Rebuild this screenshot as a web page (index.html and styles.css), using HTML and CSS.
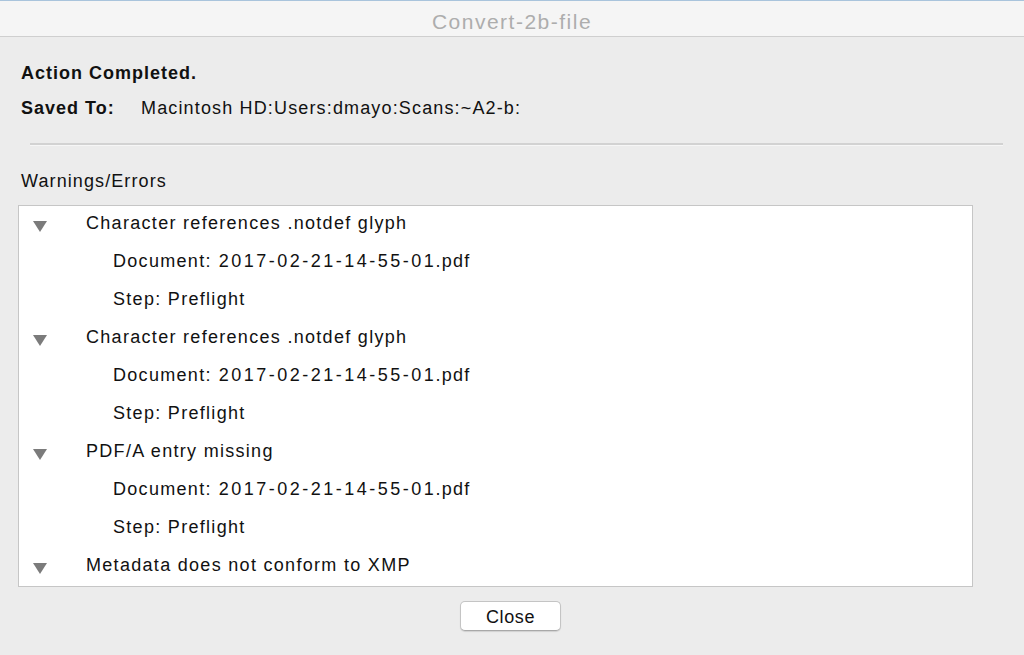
FILE: index.html
```html
<!DOCTYPE html>
<html>
<head>
<meta charset="utf-8">
<link rel="stylesheet" href="styles.css">
</head>
<body>
<div class="window">
  <div class="titlebar">Convert-2b-file</div>
  <div class="content">
    <div class="status">Action Completed.</div>
    <div class="saved"><span class="label">Saved To:</span><span class="path">Macintosh HD:Users:dmayo:Scans:~A2-b:</span></div>
    <div class="sep"></div>
    <div class="section">Warnings/Errors</div>
    <div class="list">
      <div class="row top"><span class="tri"></span><span>Character references .notdef glyph</span></div>
      <div class="row sub">Document:<span class="num">2017-02-21-14-55-01</span>.pdf</div>
      <div class="row sub">Step: Preflight</div>
      <div class="row top"><span class="tri"></span><span>Character references .notdef glyph</span></div>
      <div class="row sub">Document:<span class="num">2017-02-21-14-55-01</span>.pdf</div>
      <div class="row sub">Step: Preflight</div>
      <div class="row top"><span class="tri"></span><span>PDF/A entry missing</span></div>
      <div class="row sub">Document:<span class="num">2017-02-21-14-55-01</span>.pdf</div>
      <div class="row sub">Step: Preflight</div>
      <div class="row top"><span class="tri"></span><span>Metadata does not conform to XMP</span></div>
    </div>
    <div class="buttons"><button class="btn">Close</button></div>
  </div>
</div>
</body>
</html>
```

FILE: styles.css
```css
html, body {
  margin: 0;
  padding: 0;
  background: #a9c4dc;
}
body {
  width: 1024px;
  height: 655px;
  overflow: hidden;
  font-family: "Liberation Sans", Arial, sans-serif;
  color: #111;
}
.window {
  margin-top: 1px;
  height: 654px;
  background: #ececec;
  display: flex;
  flex-direction: column;
}
.titlebar {
  height: 36px;
  box-sizing: border-box;
  padding-top: 4px;
  background: #f5f5f5;
  border-bottom: 1px solid #cfcfcf;
  text-align: center;
  line-height: 33px;
  font-size: 21px;
  color: #adadad;
  letter-spacing: 1.5px;
}
.content {
  padding: 0 0 0 21px;
  display: flex;
  flex-direction: column;
}
.status {
  margin-top: 26px;
  font-weight: bold;
  font-size: 18px;
  line-height: 20px;
  letter-spacing: 1px;
}
.saved {
  margin-top: 15px;
  font-size: 18px;
  line-height: 20px;
  display: flex;
  letter-spacing: 1.15px;
}
.label {
  font-weight: bold;
  width: 120px;
  letter-spacing: 1px;
}
.sep {
  margin: 25px 21px 0 9px;
  height: 2px;
  background: #d2d2d2;
  border-bottom: 1px solid #f6f6f6;
}
.section {
  margin-top: 25px;
  font-size: 18px;
  line-height: 20px;
  letter-spacing: 1.1px;
}
.list {
  margin: 14px 0 0 -3px;
  width: 955px;
  height: 382px;
  box-sizing: border-box;
  background: #fff;
  border: 1px solid #c6c6c6;
  overflow: hidden;
}
.row {
  height: 38px;
  box-sizing: border-box;
  padding-top: 7px;
  line-height: 20px;
  display: flex;
  align-items: flex-start;
  font-size: 18px;
  letter-spacing: 1.3px;
  color: #111;
}
.row.top {
  padding-left: 14px;
}
.row.sub {
  padding-left: 94px;
}
.num {
  letter-spacing: 2.5px;
  margin: 0 -1px 0 7px;
}
.tri {
  width: 0;
  height: 0;
  border-left: 7px solid transparent;
  border-right: 7px solid transparent;
  border-top: 11px solid #7b7b7b;
  margin-top: 8px;
  margin-right: 39px;
}
.buttons {
  display: flex;
  justify-content: center;
  margin-top: 14px;
  padding-right: 24px;
}
.btn {
  width: 101px;
  height: 30px;
  background: #fff;
  border: 1px solid #c4c4c4;
  border-bottom-color: #a8a8a8;
  border-radius: 5px;
  box-shadow: 0 1px 1px rgba(0,0,0,0.12);
  font-family: "Liberation Sans", Arial, sans-serif;
  font-size: 18px;
  letter-spacing: 0.6px;
  color: #111;
  padding: 2px 0 0 0;
}
```
